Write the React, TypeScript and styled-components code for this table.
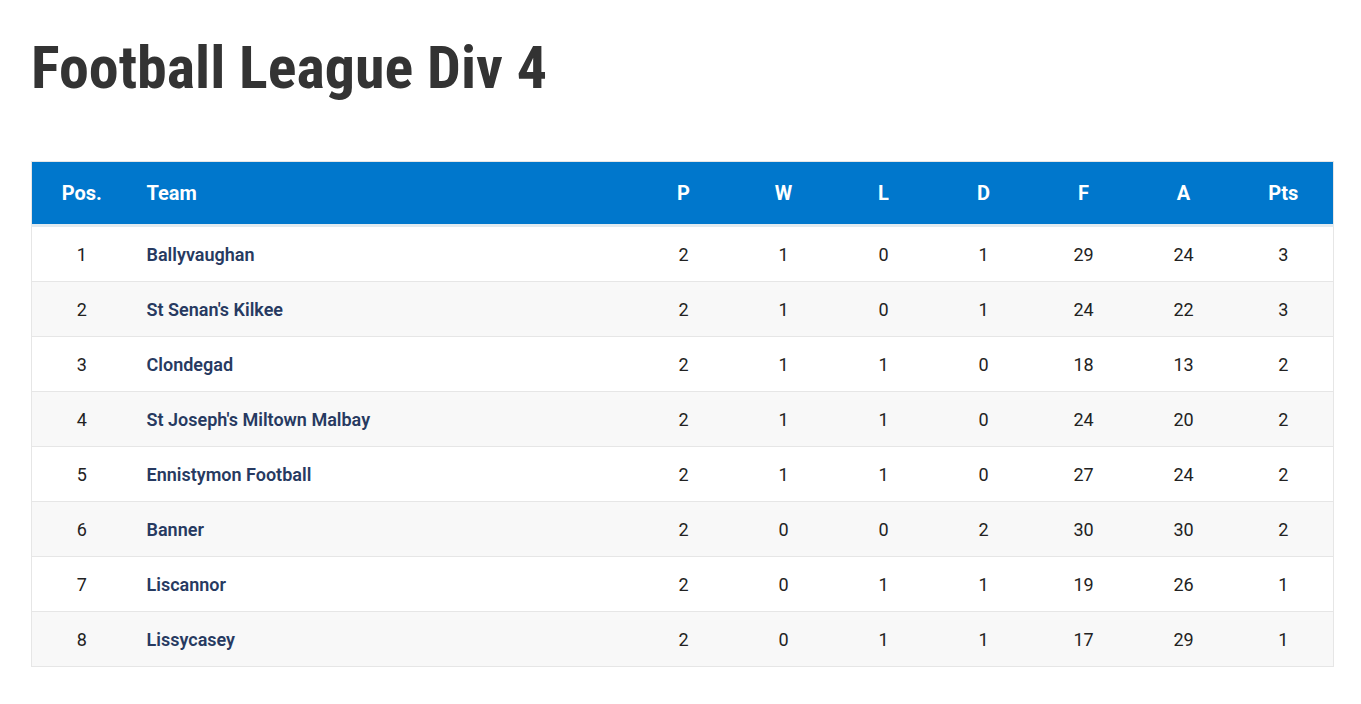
import React from "react";
import styled, { createGlobalStyle } from "styled-components";

const Global = createGlobalStyle`
  html, body { margin: 0; padding: 0; background: #ffffff; }
  body { font-family: Roboto, "Liberation Sans", sans-serif; }
`;

const Page = styled.div`
  padding: 26px 27px 0 31px;
`;

const Title = styled.h1`
  margin: 0 0 51px 0;
  font-family: "Roboto Condensed", Roboto, sans-serif;
  font-stretch: 75%;
  font-weight: 700;
  font-size: 60px;
  line-height: 84px;
  color: #333333;
  letter-spacing: 0;
`;

const Table = styled.table`
  width: 1303px;
  border-collapse: collapse;
  border: 1px solid #e6e6e6;
  font-size: 18px;
  table-layout: fixed;
`;

const HeadRow = styled.tr`
  background: #0077cc;
  border-bottom: 3px solid #e2eaef;
`;

const Th = styled.th<{ $align?: "left" | "center"; $w?: number }>`
  height: 64px;
  padding: 0 15px;
  color: #ffffff;
  font-weight: 700;
  font-size: 20px;
  text-align: ${(p) => p.$align ?? "center"};
  width: ${(p) => (p.$w ? `${p.$w}px` : "auto")};
  box-sizing: border-box;
`;

const Row = styled.tr<{ $alt: boolean }>`
  background: ${(p) => (p.$alt ? "#f8f8f8" : "#ffffff")};
  border-bottom: 1px solid #e6e6e6;
`;

const Td = styled.td<{ $team?: boolean }>`
  height: 54px;
  padding: 0 15px;
  text-align: ${(p) => (p.$team ? "left" : "center")};
  color: ${(p) => (p.$team ? "#273a61" : "#222222")};
  font-weight: ${(p) => (p.$team ? 600 : 400)};
  font-size: 18px;
`;

const rows: [number, string, number, number, number, number, number, number, number][] = [
  [1, "Ballyvaughan", 2, 1, 0, 1, 29, 24, 3],
  [2, "St Senan's Kilkee", 2, 1, 0, 1, 24, 22, 3],
  [3, "Clondegad", 2, 1, 1, 0, 18, 13, 2],
  [4, "St Joseph's Miltown Malbay", 2, 1, 1, 0, 24, 20, 2],
  [5, "Ennistymon Football", 2, 1, 1, 0, 27, 24, 2],
  [6, "Banner", 2, 0, 0, 2, 30, 30, 2],
  [7, "Liscannor", 2, 0, 1, 1, 19, 26, 1],
  [8, "Lissycasey", 2, 0, 1, 1, 17, 29, 1],
];

export default function App() {
  return (
    <Page>
      <Global />
      <Title>Football League Div 4</Title>
      <Table>
        <thead>
          <HeadRow>
            <Th $w={100}>Pos.</Th>
            <Th $align="left">Team</Th>
            {["P", "W", "L", "D", "F", "A", "Pts"].map((h) => (
              <Th key={h} $w={100}>{h}</Th>
            ))}
          </HeadRow>
        </thead>
        <tbody>
          {rows.map((r, i) => (
            <Row key={r[0]} $alt={i % 2 === 1}>
              <Td>{r[0]}</Td>
              <Td $team>{r[1]}</Td>
              {r.slice(2).map((v, j) => (
                <Td key={j}>{v}</Td>
              ))}
            </Row>
          ))}
        </tbody>
      </Table>
    </Page>
  );
}
